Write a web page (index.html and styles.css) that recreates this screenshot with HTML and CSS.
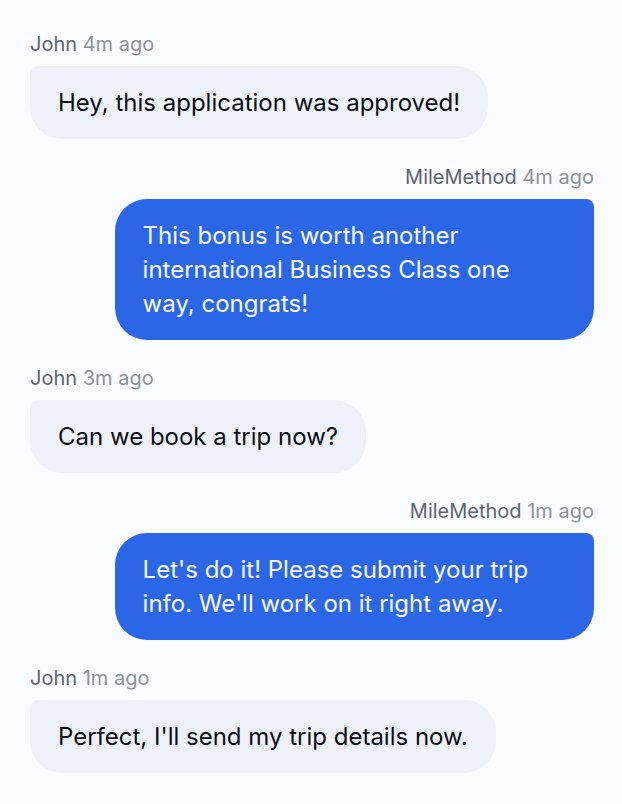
FILE: index.html
```
<!DOCTYPE html>
<html lang="en">
<head>
  <meta charset="UTF-8">
  <meta name="viewport" content="width=device-width, initial-scale=1.0">
  <title>MileMethod Chat</title>
  <link rel="stylesheet" href="styles.css">
</head>
<body>
  <main class="chat">
    <div class="message received">
      <div class="meta"><span class="name">John</span> 4m ago</div>
      <p class="bubble">Hey, this application was approved!</p>
    </div>

    <div class="message sent">
      <div class="meta"><span class="name">MileMethod</span> 4m ago</div>
      <p class="bubble">This bonus is worth another international Business Class one way, congrats!</p>
    </div>

    <div class="message received">
      <div class="meta"><span class="name">John</span> 3m ago</div>
      <p class="bubble">Can we book a trip now?</p>
    </div>

    <div class="message sent">
      <div class="meta"><span class="name">MileMethod</span> 1m ago</div>
      <p class="bubble">Let's do it! Please submit your trip info. We'll work on it right away.</p>
    </div>

    <div class="message received">
      <div class="meta"><span class="name">John</span> 1m ago</div>
      <p class="bubble">Perfect, I'll send my trip details now.</p>
    </div>
  </main>
</body>
</html>
```

FILE: styles.css
```
body {
  margin: 0;
  background-color: #fbfcff;
  font-family: Inter, "Liberation Sans", sans-serif;
}

.chat {
  display: flex;
  flex-direction: column;
  gap: 24px;
  padding: 30px 28px 30px 30px;
}

.message {
  display: flex;
  flex-direction: column;
  align-items: flex-start;
  gap: 8px;
}

.meta {
  font-size: 20px;
  line-height: 28px;
  color: #8d9299;
}

.name {
  color: #5d646e;
}

.bubble {
  box-sizing: border-box;
  max-width: 85%;
  margin: 0;
  padding: 20px 28px 19px;
  border-radius: 8px 32px 32px 32px;
  background-color: #eef1f9;
  color: #0b0d17;
  font-size: 24px;
  line-height: 34px;
}

.sent {
  align-items: flex-end;
}

.sent .bubble {
  border-radius: 32px 8px 32px 32px;
  background-color: #2b66e6;
  color: #f8faff;
}
```
